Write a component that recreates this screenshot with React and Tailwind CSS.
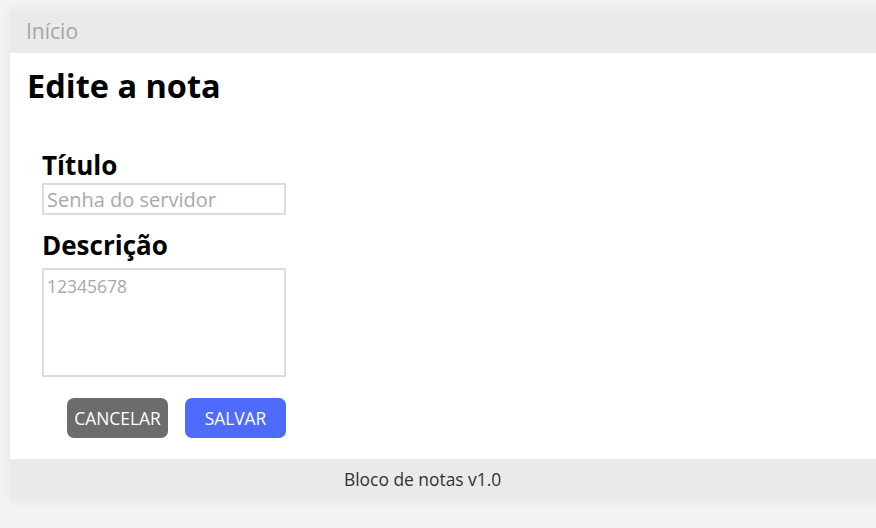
export default function App() {
  return (
    <div className="w-[876px] h-[528px] bg-[#f2f3f5] overflow-hidden pt-[11px] pl-[10px]" style={{ fontFamily: '"Open Sans", "Noto Sans", sans-serif' }}>
      <div className="w-[900px] bg-white shadow-[0_0_12px_rgba(0,0,0,0.06)]">
        <div className="h-[42px] bg-[#eaeaea] flex items-center pl-[16px] text-[21px] text-[#a6a6a6]">Início</div>
        <div className="pl-[17px] pt-[11px] pb-[21px]">
          <h1 className="text-[32.5px] font-bold text-black leading-[44px] pb-[1px]">Edite a nota</h1>
          <div className="pl-[15px] pt-[40px] w-[276px]">
            <div className="text-[26px] font-bold text-black leading-[33px]">Título</div>
            <input className="mt-[1px] w-[244px] h-[32px] border-2 border-[#dddddd] px-[3px] text-[20px] outline-none placeholder:text-[#a8a8a8]" placeholder="Senha do servidor" />
            <div className="mt-[14px] text-[26px] font-bold text-black leading-[33px]">Descrição</div>
            <textarea className="mt-[6px] block w-[244px] h-[109px] border-2 border-[#dddddd] px-[3px] pt-[4px] text-[17.5px] leading-[24px] outline-none resize-none placeholder:text-[#a8a8a8]" placeholder="12345678" />
            <div className="flex gap-[17px] mt-[21px] pl-[25px]">
              <button className="w-[101px] h-[40px] rounded-[7px] bg-[#6c6c6c] text-white text-[17.4px]">CANCELAR</button>
              <button className="w-[101px] h-[40px] rounded-[7px] bg-[#4e6bfd] text-white text-[17.4px]">SALVAR</button>
            </div>
          </div>
        </div>
        <div className="h-[41px] bg-[#eaeaea] flex items-center pl-[334px] text-[17.4px] text-[#333333]">Bloco de notas v1.0</div>
      </div>
    </div>
  );
}
